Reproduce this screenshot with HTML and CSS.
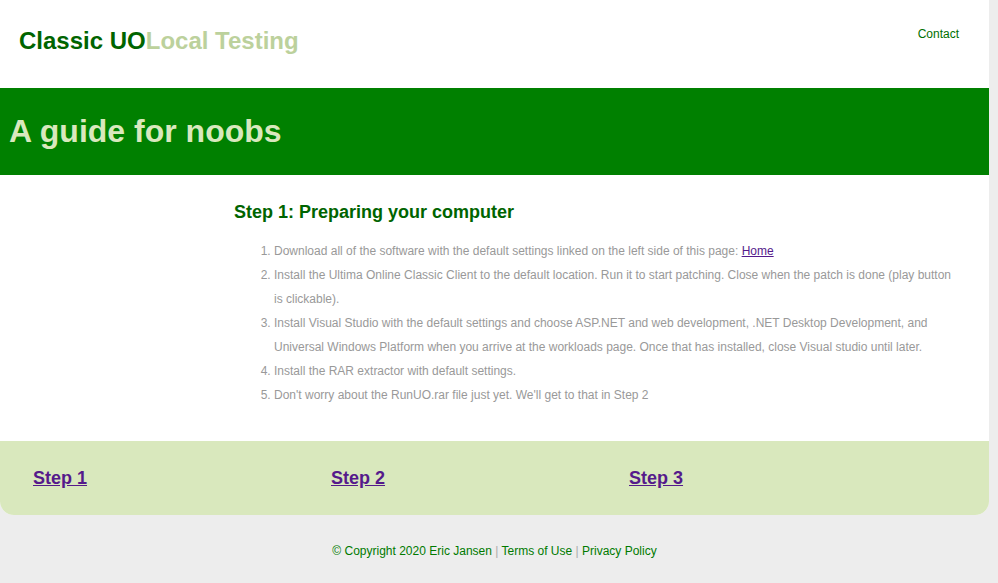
FILE: index.html
```html
<!DOCTYPE html>
<html>
<head>
<meta charset="utf-8">
<link rel="stylesheet" href="styles.css">
</head>
<body>
<div class="page">
  <header class="top">
    <div class="brand"><span class="b1">Classic UO</span><span class="b2">Local Testing</span></div>
    <nav class="nav"><a href="#">Contact</a></nav>
  </header>
  <section class="banner"><h1>A guide for noobs</h1></section>
  <main class="main">
    <h2>Step 1: Preparing your computer</h2>
    <ol class="steps">
      <li>Download all of the software with the default settings linked on the left side of this page: <a class="home" href="#">Home</a></li>
      <li>Install the Ultima Online Classic Client to the default location. Run it to start patching. Close when the patch is done (play button is clickable).</li>
      <li>Install Visual Studio with the default settings and choose ASP.NET and web development, .NET Desktop Development, and Universal Windows Platform when you arrive at the workloads page. Once that has installed, close Visual studio until later.</li>
      <li>Install the RAR extractor with default settings.</li>
      <li>Don't worry about the RunUO.rar file just yet. We'll get to that in Step 2</li>
    </ol>
  </main>
  <section class="stepnav">
    <div class="col"><a href="#">Step 1</a></div>
    <div class="col"><a href="#">Step 2</a></div>
    <div class="col"><a href="#">Step 3</a></div>
  </section>
</div>
<footer class="foot">
  <a href="#">© Copyright 2020 Eric Jansen</a> <span class="sep">|</span> <a href="#">Terms of Use</a> <span class="sep">|</span> <a href="#">Privacy Policy</a>
</footer>
</body>
</html>
```
FILE: styles.css
```css
html, body {
  margin: 0;
  padding: 0;
}
body {
  background: #ededed;
  font-family: "Liberation Sans", Arial, sans-serif;
}
.page {
  width: 989px;
  background: #ffffff;
  border-radius: 0 0 14px 14px;
}
.top {
  height: 88px;
  display: flex;
  justify-content: space-between;
  align-items: flex-start;
}
.brand {
  font-size: 24px;
  font-weight: bold;
  padding: 27px 0 0 19px;
  line-height: 27px;
}
.b1 { color: #006400; }
.b2 { color: #bcd19c; }
.nav {
  padding: 26px 30px 0 0;
  font-size: 12px;
  line-height: 16px;
}
.nav a {
  color: #007000;
  text-decoration: none;
}
.banner {
  background: #008000;
  height: 87px;
  display: flex;
  align-items: center;
}
.banner h1 {
  margin: 0 0 0 9px;
  font-size: 32px;
  line-height: 37px;
  color: #d9e8bd;
  font-weight: bold;
}
.main {
  padding: 27px 36px 34px 234px;
}
.main h2 {
  margin: 0 0 16px 0;
  font-size: 18px;
  line-height: 21px;
  color: #006400;
}
.steps {
  margin: 0;
  padding-left: 40px;
  font-size: 12px;
  line-height: 24px;
  color: #999999;
}
.home {
  color: #551a8b;
}
.stepnav {
  background: #d9e8bd;
  height: 74px;
  border-radius: 0 0 14px 14px;
  display: flex;
  align-items: center;
  padding-left: 33px;
}
.col {
  width: 298px;
}
.col a {
  font-size: 18px;
  font-weight: bold;
  color: #551a8b;
  line-height: 21px;
}
.foot {
  width: 989px;
  text-align: center;
  font-size: 12px;
  padding-top: 29px;
  line-height: 14px;
}
.foot a {
  color: #007a00;
  text-decoration: none;
}
.sep {
  color: #aaaaaa;
}
```
